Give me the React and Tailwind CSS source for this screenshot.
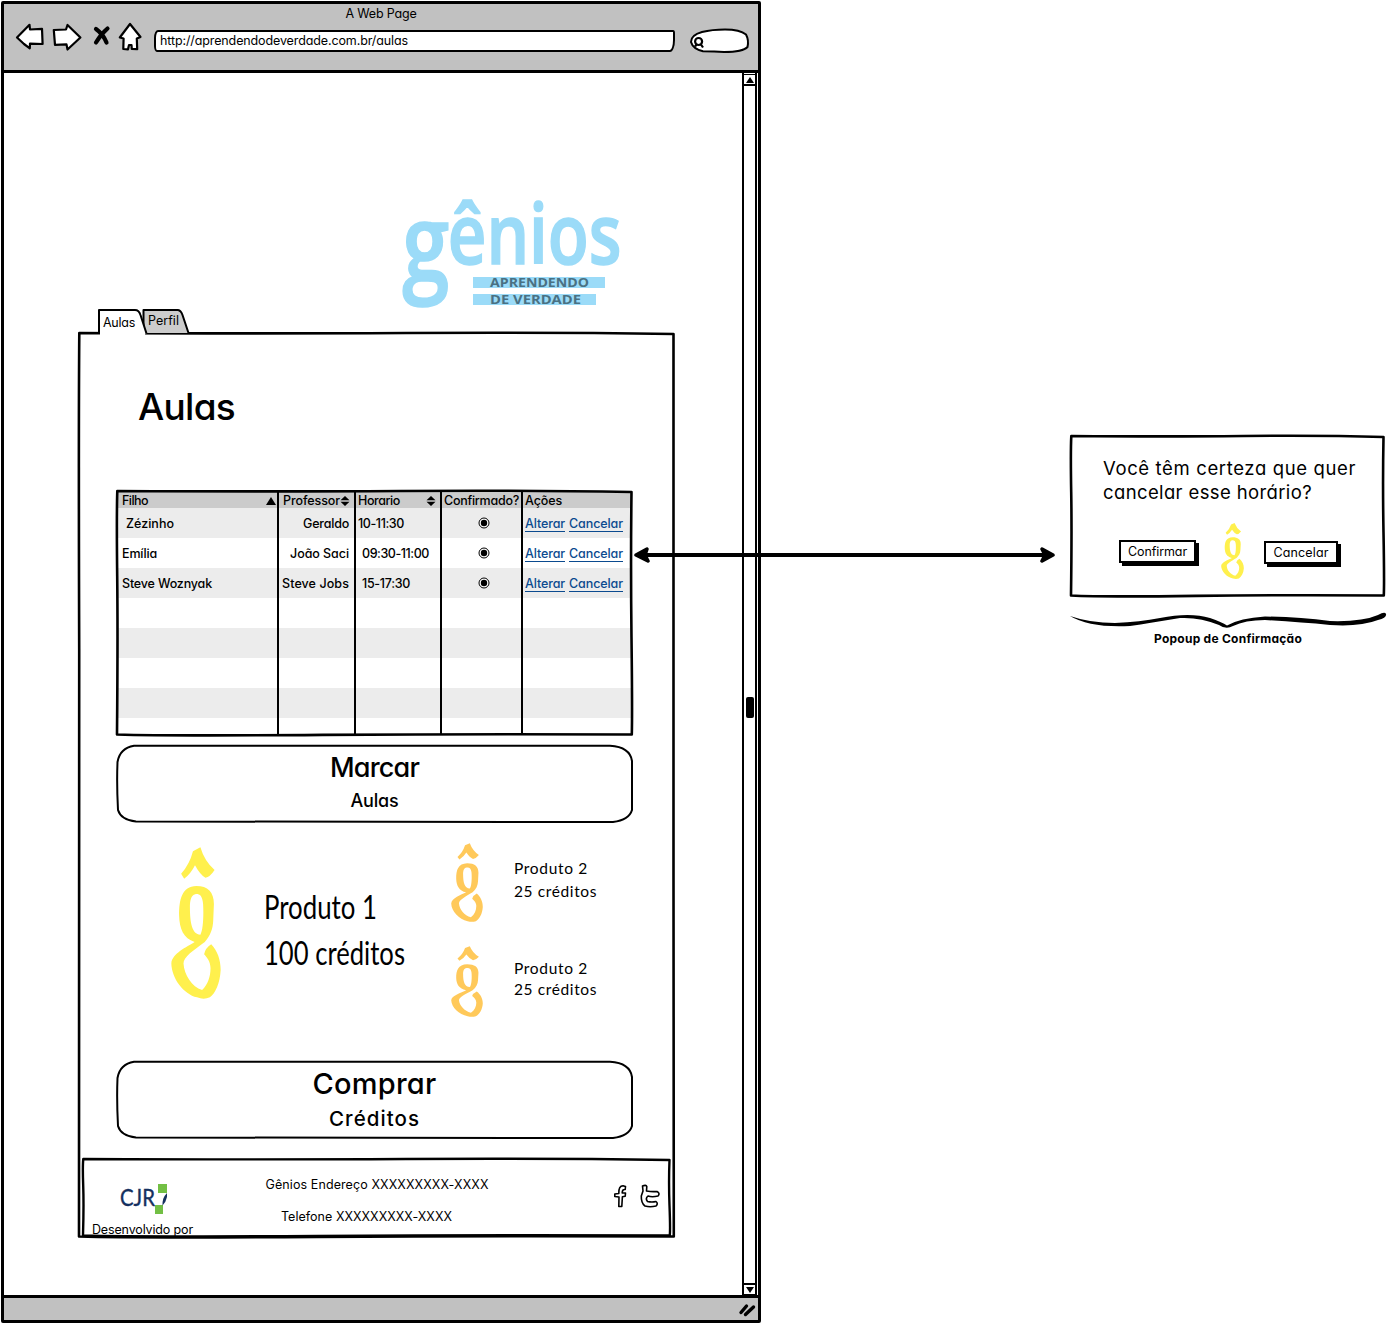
import React, { useLayoutEffect, useRef } from "react";

// A line of text whose letters are spread (or stretched) to a given width.
function T({ w, stretch, className = "", children }) {
  const outer = useRef(null);
  const inner = useRef(null);
  useLayoutEffect(() => {
    const el = inner.current;
    el.style.letterSpacing = "0px";
    const natural = el.offsetWidth ? el.getBoundingClientRect().width : w;
    if (stretch) {
      el.style.transform = `scaleX(${w / natural})`;
    } else {
      el.style.letterSpacing = `${(w - natural) / Math.max(1, String(children).length)}px`;
    }
    outer.current.style.width = `${w}px`;
  }, [w, stretch, children]);
  return (
    <span ref={outer} className={`block shrink-0 whitespace-nowrap ${className}`}>
      <span ref={inner} className="inline-block origin-left whitespace-pre align-top">
        {children}
      </span>
    </span>
  );
}

// Slightly uneven hand-drawn outline laid over a box with a 2px transparent border.
function Frame({ w, h, sw = 2.6, fill = "none" }) {
  const r = w - 1.5;
  const b = h - 1.5;
  return (
    <svg width={w} height={h} className="pointer-events-none absolute -left-[2px] -top-[2px] max-w-none overflow-visible">
      <path
        d={`M1.3 1Q${w * 0.3} 1.8 ${w * 0.55} 1T${r} 2Q${r - 0.9} ${h * 0.3} ${r} ${h * 0.6}T${r + 0.3} ${b}Q${w * 0.7} ${b - 0.8} ${w * 0.4} ${b + 0.4}T1 ${b}Q1.9 ${h * 0.6} 1.2 ${h * 0.35}T1.3 1Z`}
        fill={fill}
        stroke="#000"
        strokeWidth={sw}
        strokeLinejoin="round"
      />
    </svg>
  );
}

function Mark({ className }) {
  return (
    <svg viewBox="63 32 148 461" preserveAspectRatio="none" className={className} fill="currentColor" fillRule="evenodd">
      <path d="M93 113Q118 85 128 45L150 33Q162 75 192 102Q178 124 165 125Q150 117 134 87Q122 112 102 128Z" />
      <path d="M138 150C172 150 190 168 190 205L188 255C187 280 180 300 163 320C130 345 100 365 100 385C102 420 125 455 155 466C172 450 180 425 180 400C180 378 170 368 161 357Q165 338 182 327C200 345 210 375 210 405C208 445 195 475 178 488Q160 496 140 488C100 478 65 430 64 385C66 355 110 335 133 320C100 310 88 280 87 240C87 190 95 152 138 150ZM135 175C122 178 119 195 119 215C119 260 125 298 150 298C158 285 160 240 158 205C156 180 148 174 135 175Z" />
    </svg>
  );
}

function Toolbar() {
  return (
    <div className="flex h-[30px] items-start pl-[11px]">
      <svg className="mt-[2px] h-[28px] w-[30px]" viewBox="15 22 30 28" fill="#fff" stroke="#000" strokeWidth="2.200" strokeLinejoin="round">
        <path d="M17 37.500L29.500 24.800L30 29.500L42 28.800L42.600 44L30 43.600L29.800 48.300L24 44Z" />
      </svg>
      <svg className="ml-[7px] mt-[2px] h-[30px] w-[30px]" viewBox="52 22 30 30" fill="#fff" stroke="#000" strokeWidth="2.200" strokeLinejoin="round">
        <path d="M53.800 30L66 29.500L67.500 25L80.400 37.500L67.500 49.500L66.500 44.400L55 44.800Z" />
      </svg>
      <svg className="ml-[10px] mt-[4px] h-[22px] w-[20px]" viewBox="92 24 20 22" fill="none" stroke="#000" strokeWidth="4.200" strokeLinecap="round">
        <path d="M96 29Q103 34 106.500 42.500M107.500 28.500Q101 34 96 42.500" />
      </svg>
      <svg className="ml-[6px] mt-[2px] h-[30px] w-[25px]" viewBox="118 22 25 30" fill="#fff" stroke="#000" strokeWidth="2.200" strokeLinejoin="round">
        <path d="M130 24L140.500 37L136.800 38.500L137.200 49.200L131.800 49L131.500 45L129 45L128 49.300L123.300 49L123.600 38.500L119.800 37.500Z" />
      </svg>
      <div className="ml-[11px] mt-[10px] flex h-[22px] w-[521px] items-center rounded-[4px_2px_5px_3px/8px_3px_12px_6px] border-2 border-black bg-white pl-[4px]">
        <T w={248} className="text-[12.5px] leading-[16px]">http://aprendendodeverdade.com.br/aulas</T>
      </div>
      <svg className="ml-[14px] mt-[8px] h-[26px] w-[62px]" viewBox="689 28 62 26" fill="#fff" stroke="#000" strokeWidth="2">
        <path d="M702 32Q712 29.500 725 29.500Q740 29.500 746 34.500Q749 40 747.500 47Q743 52 724 52Q715 51.500 703 51.200Q693 49 691 42Q691 35 702 32Z" />
        <circle cx="698.600" cy="41.500" r="3.500" strokeWidth="2.200" />
        <path d="M701 44.500L703 47.500M696.500 44.500L695 46.500" strokeWidth="2.200" />
      </svg>
    </div>
  );
}

function Wordmark() {
  return (
    <svg className="ml-[396px] h-[120px] w-[230px]" viewBox="400 190 230 120">
      <text transform="translate(403 0) scale(0.8 1)" fill="#9bdbf8" stroke="#9bdbf8" strokeWidth="1.500" fontFamily="Open Sans" fontWeight="600">
        <tspan x="-1" y="281" fontSize="106">g</tspan>
        <tspan x="56" y="264" fontSize="84" textLength="217">ênios</tspan>
      </text>
      <path d="M473 277h132v11h-132zM473 294h123v11h-123z" fill="#9bdbf8" />
      <g fill="#4a7183" fontFamily="Open Sans" fontWeight="700" fontSize="12.500">
        <text x="490" y="287" textLength="99" lengthAdjust="spacingAndGlyphs">APRENDENDO</text>
        <text x="490" y="304" textLength="91" lengthAdjust="spacingAndGlyphs">DE VERDADE</text>
      </g>
    </svg>
  );
}

function Tabs() {
  return (
    <div className="relative z-10 -mb-[3px] -mt-px ml-[93px] flex h-[26px] w-[93px]">
      <svg className="absolute inset-0 h-[26px] w-[93px]" viewBox="97 309 93 26" stroke="#000" strokeWidth="2" strokeLinejoin="round">
        <path d="M143.500 333L143.500 310L178 310Q181 310.500 182.500 315L188.500 333" fill="#ccc" />
        <path d="M100 332L145.500 332L145 335.500L100 335.500Z" fill="#fff" stroke="none" />
        <path d="M99 334L99 310L135 310Q139 310 140.500 315L146.500 333.500" fill="#fff" />
      </svg>
      <T w={32} className="relative ml-[6px] mt-[6px] text-[12.500px] leading-[16px]">Aulas</T>
      <T w={31} className="relative ml-[13px] mt-[4px] text-[12.500px] leading-[16px]">Perfil</T>
    </div>
  );
}

const COLS = "grid grid-cols-[161px_77px_86px_81px_109px]";
const CELL = "flex h-full items-center border-r-2 border-black";

function Sort() {
  return (
    <svg className="h-[10px] w-[10px]" viewBox="0 0 10 10">
      <path d="M5 0L9.500 4.200H.5ZM5 10L9.500 5.800H.5Z" />
    </svg>
  );
}

const ROWS = [
  ["Zézinho", 48, "pl-[8px]", "Geraldo", 46, "10-11:30", 46, "pl-[2px]"],
  ["Emília", 35, "pl-[4px]", "João Saci", 59, "09:30-11:00", 67, "pl-[6px]"],
  ["Steve Woznyak", 90, "pl-[4px]", "Steve Jobs", 67, "15-17:30", 48, "pl-[6px]"],
];

function Schedule() {
  return (
    <div className="relative ml-[36px] mt-[64px] flex h-[246px] w-[517px] flex-col border-2 border-transparent text-[12.500px] font-medium leading-[16px]">
      <div className={`${COLS} h-[16px] shrink-0 bg-[#cbcbcb]`}>
        <div className={`${CELL} justify-between pl-[4px] pr-[1px]`}>
          <T w={26} className="pt-px">Filho</T>
          <svg className="h-[8px] w-[10px]" viewBox="0 0 10 8"><path d="M5 0L10 8H0Z" /></svg>
        </div>
        <div className={`${CELL} pl-[4px]`}><T w={57} className="pt-px">Professor</T><Sort /></div>
        <div className={`${CELL} justify-between pl-[2px] pr-[4px]`}><T w={42} className="pt-px">Horario</T><Sort /></div>
        <div className={`${CELL} pl-[2px]`}><T w={75} className="pt-px">Confirmado?</T></div>
        <div className="flex items-center pl-[2px]"><T w={37} className="pt-px">Ações</T></div>
      </div>
      {[0, 1, 2, 3, 4, 5, 6, 7].map((i) => {
        const r = ROWS[i];
        return (
          <div key={i} className={`${COLS} ${i === 7 ? "h-[16px]" : "h-[30px]"} shrink-0 ${i % 2 ? "bg-white" : "bg-[#ececec]"}`}>
            <div className={`${CELL} ${r ? r[2] : ""}`}>{r && <T w={r[1]} className="pt-[2px]">{r[0]}</T>}</div>
            <div className={`${CELL} justify-end pr-[5px]`}>{r && <T w={r[4]} className="pt-[2px]">{r[3]}</T>}</div>
            <div className={`${CELL} ${r ? r[7] : ""}`}>{r && <T w={r[6]} className="pt-[2px]">{r[5]}</T>}</div>
            <div className={`${CELL} justify-center pl-[5px]`}>
              {r && (
                <svg className="h-[12px] w-[12px]" viewBox="0 0 12 12">
                  <circle cx="6" cy="6" r="5" fill="#fff" stroke="#000" />
                  <circle cx="6" cy="6" r="3.200" />
                </svg>
              )}
            </div>
            <div className="flex items-center gap-[4px] pl-[2px] text-[#0b4a8f]">
              {r && (
                <>
                  <T w={40} className="border-b border-[#0b4a8f] pt-[2px] leading-[15px]">Alterar</T>
                  <T w={54} className="border-b border-[#0b4a8f] pt-[2px] leading-[15px]">Cancelar</T>
                </>
              )}
            </div>
          </div>
        );
      })}
      <Frame w={517} h={246} />
    </div>
  );
}

function BigButton({ className = "", children }) {
  return (
    <button className={`relative ml-[36px] flex h-[79px] w-[517px] flex-col items-center font-medium ${className}`}>
      <svg width="517" height="79" className="absolute inset-0" fill="#fff" stroke="#000" strokeWidth="2">
        <path d="M18 1.800Q250 .8 494 1.800Q514 3 516 17V66Q513 76 497 78Q250 78.600 20 77.500Q5 76 2 66Q.6 40 1.500 18Q4 4 18 1.800Z" />
      </svg>
      {children}
    </button>
  );
}

function Products() {
  return (
    <div className="flex h-[237px] pl-[91px] font-[Lato,sans-serif]">
      <Mark className="mt-[24px] h-[152px] w-[50px] text-[#fff04d]" />
      <div className="ml-[43px] mt-[64px] flex w-[141px] flex-col gap-[6px] text-[32px] leading-[40px]">
        <T w={113} stretch>Produto 1</T>
        <T w={141} stretch>100 créditos</T>
      </div>
      <div className="ml-[46px] mt-[20px] flex flex-col gap-[24px]">
        <Mark className="h-[79px] w-[32px] text-[#ffc95a]" />
        <Mark className="h-[71px] w-[32px] text-[#ffc95a]" />
      </div>
      <div className="ml-[31px] mt-[34px] flex flex-col text-[15.500px]">
        <T w={74} className="leading-[23px]">Produto 2</T>
        <T w={83} className="leading-[23px]">25 créditos</T>
        <T w={74} className="mt-[55px] leading-[21px]">Produto 2</T>
        <T w={83} className="leading-[21px]">25 créditos</T>
      </div>
    </div>
  );
}

function SiteFooter() {
  return (
    <div className="relative ml-[2px] mt-[19px] flex h-[79px] w-[589px] border-2 border-transparent text-[12.500px] leading-[16px]">
      <div className="w-[120px] pl-[8px] pt-[22px]">
        <svg className="ml-[27px] h-[34px] w-[50px]" viewBox="119 1182 50 34">
          <text x="120" y="1205.500" fontFamily="Lato" fontSize="23" fill="#14305f" stroke="#14305f" strokeWidth=".4" textLength="35" lengthAdjust="spacingAndGlyphs">CJR</text>
          <path d="M158 1184h9v9h-9zM155 1205h8v9h-8z" fill="#72bf44" />
          <path d="M167 1193V1197Q166 1202 162.500 1205.500Q162 1198 167 1193Z" fill="#14305f" />
        </svg>
        <T w={101} className="mt-[6px]">Desenvolvido por</T>
      </div>
      <div className="flex w-[325px] flex-col items-center pl-[23px] pt-[17px]">
        <T w={223} className="-ml-[2px]">Gênios Endereço XXXXXXXXX-XXXX</T>
        <T w={171} className="-ml-[23px] mt-[16px]">Telefone XXXXXXXXX-XXXX</T>
      </div>
      <svg className="ml-[83px] mt-[23px] h-[26px] w-[50px]" viewBox="612 1183 50 26" fill="#fff" stroke="#000" strokeWidth="1.600" strokeLinejoin="round">
        <path d="M618.800 1206.500L619 1197L614.800 1196.500L614.800 1194L618.800 1193.500Q618.500 1186 623 1185.800L625.500 1186.500L625.200 1189.500Q622.200 1189 622.200 1193L625.500 1193L625.200 1196.300L622.400 1196.800L621.800 1206.500Z" />
        <path d="M642.500 1186Q646 1184.500 646.800 1186.500L646.500 1191Q652 1192 657 1191.500Q660.500 1193.500 658 1196Q652 1197.500 648 1196Q645 1198.500 647.500 1201.500Q652 1202.500 656 1201.500Q658.500 1203.500 656 1206Q650 1207.500 645 1206Q641 1203 641.300 1196L643 1191Z" />
      </svg>
      <Frame w={589} h={79} sw={2.4} />
    </div>
  );
}

function Scrollbar() {
  return (
    <div className="flex w-[15px] shrink-0 flex-col items-center border-x-2 border-black bg-white pt-[1px]">
      <div className="flex h-[12px] w-full shrink-0 items-center justify-center border-b-2 border-t border-black">
        <svg className="h-[6px] w-[8px]" viewBox="0 0 8 6"><path d="M4 0L8 6H0Z" /></svg>
      </div>
      <div className="mt-[611px] h-[21px] w-[8px] shrink-0 rounded-[2px] bg-black" />
      <div className="mt-auto flex h-[12px] w-full shrink-0 items-center justify-center border-b border-t-2 border-black">
        <svg className="h-[6px] w-[8px]" viewBox="0 0 8 6"><path d="M4 6L8 0H0Z" /></svg>
      </div>
    </div>
  );
}

function BrowserWindow() {
  return (
    <div className="ml-px mt-px flex h-[1322px] w-[760px] shrink-0 flex-col rounded-[2px] border-[3px] border-black bg-white">
      <header className="h-[69px] shrink-0 border-b-[3px] border-black bg-[#c1c1c1]">
        <div className="flex justify-center pt-[2px]">
          <T w={71} className="text-[12.500px] leading-[16px]">A Web Page</T>
        </div>
        <div className="-mt-[2px]"><Toolbar /></div>
      </header>
      <div className="flex min-h-0 flex-1">
        <div className="w-[738px] pt-[117px]">
          <Wordmark />
          <Tabs />
          <div className="relative ml-[74px] h-[906px] w-[597px] border-2 border-transparent">
            <Frame w={597} h={906} />
            <h1 className="ml-[58px] pt-[53px]"><T w={97} className="text-[37px] font-medium leading-[40px]">Aulas</T></h1>
            <div className="-mt-px"><Schedule /></div>
            <BigButton className="mt-[8px]">
              <T w={89} className="relative mt-[8px] text-[27px] leading-[32px]">Marcar</T>
              <T w={48} className="relative mt-[5px] text-[18px] leading-[24px]">Aulas</T>
            </BigButton>
            <Products />
            <BigButton>
              <T w={124} className="relative mt-[8px] text-[29px] leading-[32px]">Comprar</T>
              <T w={91} className="relative mt-[7px] text-[20.500px] leading-[24px]">Créditos</T>
            </BigButton>
            <SiteFooter />
          </div>
        </div>
        <Scrollbar />
      </div>
      <div className="flex h-[25px] shrink-0 items-center justify-end border-t-[3px] border-black bg-[#c1c1c1] pr-[2px]">
        <svg className="h-[16px] w-[18px]" viewBox="0 0 18 16" stroke="#000" strokeWidth="3.400" strokeLinecap="round">
          <path d="M3 11.500L8.500 5M7.500 13.500L15.500 6" />
        </svg>
      </div>
    </div>
  );
}

function PopButton({ w, tw, className, children }) {
  const size = w === 77 ? "w-[77px]" : "w-[74px]";
  return (
    <button className={`flex h-[23px] ${size} items-center justify-center border-2 border-black bg-white shadow-[3px_3px_0_0_#000] ${className}`}>
      <T w={tw} className="text-[12.500px] leading-[16px]">{children}</T>
    </button>
  );
}

export default function App() {
  return (
    <div className="relative flex h-[1324px] w-[1387px] overflow-hidden bg-white font-[Inter,sans-serif] text-black [font-feature-settings:'cv11','calt'_0]">
      <BrowserWindow />
      <div className="ml-[309px] pt-[435px]">
        <div className="relative h-[162px] w-[315px] border-2 border-transparent pl-[31px] pt-[19px]">
          <Frame w={315} h={162} />
          <T w={253} className="text-[18.500px] leading-[24px]">Você têm certeza que quer</T>
          <T w={209} className="text-[18.500px] leading-[24px]">cancelar esse horário?</T>
          <div className="mt-[19px] flex">
            <PopButton w={77} tw={59} className="ml-[16px] mt-[17px]">Confirmar</PopButton>
            <Mark className="ml-[25px] h-[56px] w-[23px] text-[#fff04d]" />
            <PopButton w={74} tw={55} className="ml-[20px] mt-[18px]">Cancelar</PopButton>
          </div>
        </div>
        <svg className="mt-[15px] h-[18px] w-[317px]" viewBox="1070 612 317 18">
          <path d="M1070 616Q1090 623 1115 623Q1140 622 1160 618Q1190 612 1210 618Q1222 622 1227 625.500Q1240 618 1265 616.500Q1300 617 1330 621Q1362 622 1378 615Q1385 611 1386 614Q1387 618 1378 620Q1360 627 1330 625Q1300 622 1265 620Q1245 620 1233 626Q1226 630 1219 625Q1200 617 1180 618Q1150 623 1130 626Q1090 628 1070 616Z" />
        </svg>
        <T w={148} className="ml-[84px] mt-px text-[12px] font-bold leading-[16px]">Popoup de Confirmação</T>
      </div>
      <svg className="absolute left-[632px] top-[543px] h-[24px] w-[426px]" viewBox="632 543 426 24" stroke="#000" strokeLinecap="round" strokeLinejoin="round">
        <path d="M640 555H1048" strokeWidth="4" />
        <path d="M636 555L647 549L645 555L648 561ZM1053 555L1042 549L1045 555L1042 561Z" strokeWidth="3.500" />
      </svg>
    </div>
  );
}
